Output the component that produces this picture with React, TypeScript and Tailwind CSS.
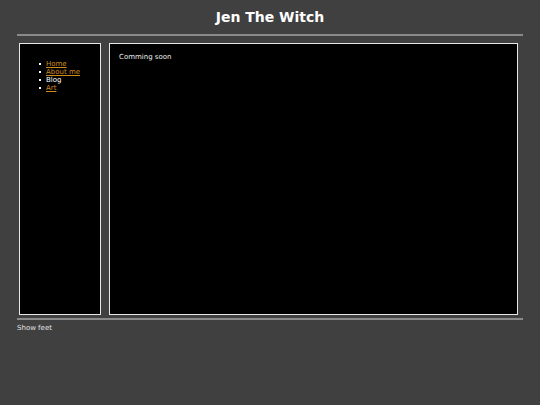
const links = [
  { label: "Home", href: "#", current: false },
  { label: "About me", href: "#", current: false },
  { label: "Blog", href: "#", current: true },
  { label: "Art", href: "#", current: false },
];

export default function App() {
  return (
    <div className="min-h-[405px] bg-[#404040] px-[17px] text-white font-['DejaVu_Sans',sans-serif]">
      {/* Header */}
      <h1 className="pt-[9px] pb-[8px] text-center text-[14px] leading-[17px] font-bold">
        Jen The Witch
      </h1>
      <div className="h-[2px] bg-[#8a8a8a]" />

      {/* Columns */}
      <div className="mt-[7px] flex gap-[8px] pl-[2px] pr-[5px]">
        <nav className="h-[272px] w-[82px] shrink-0 border border-[#e6e6e6] bg-black pl-[19px] pt-[16px]">
          <ul className="text-[7px] leading-[8px]">
            {links.map((l) => (
              <li key={l.label} className="flex items-center gap-[5px]">
                <span className="h-[2px] w-[2px] bg-white" />
                {l.current ? (
                  <span className="text-white">{l.label}</span>
                ) : (
                  <a href={l.href} className="text-[#d08a1a] underline">
                    {l.label}
                  </a>
                )}
              </li>
            ))}
          </ul>
        </nav>
        <main className="h-[272px] flex-1 border border-[#e6e6e6] bg-black px-[9px] pt-[9px]">
          <p className="text-[7px] leading-[8px] text-[#eeeeee]">Comming soon</p>
        </main>
      </div>

      {/* Footer */}
      <div className="mt-[3px] h-[2px] bg-[#8a8a8a]" />
      <p className="pt-[4px] text-[7px] leading-[8px] text-[#e0e0e0]">Show feet</p>
    </div>
  );
}
